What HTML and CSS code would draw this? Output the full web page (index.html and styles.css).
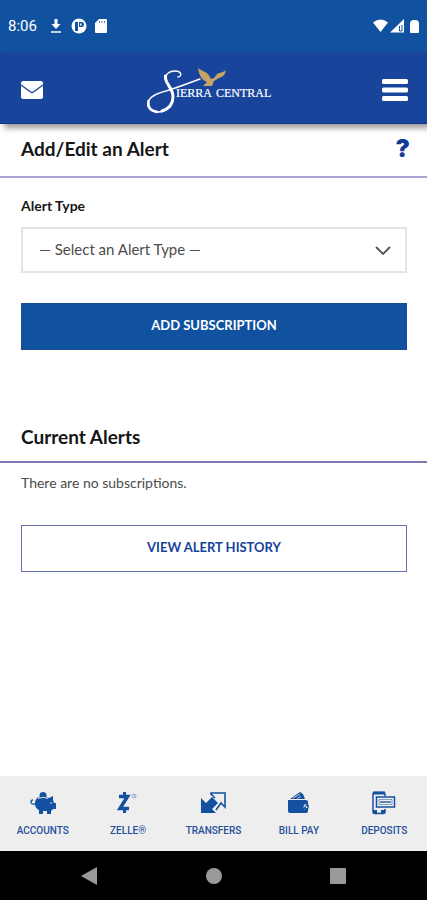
FILE: index.html
```html
<!DOCTYPE html>
<html lang="en">
<head>
<meta charset="utf-8">
<meta name="viewport" content="width=device-width, initial-scale=1">
<title>Add/Edit an Alert</title>
<link rel="stylesheet" href="styles.css">
</head>
<body>
<div class="status">
  <span class="clock">8:06</span>
  <svg class="status-left" width="58" height="16" viewBox="0 0 58 16" fill="#fff" aria-hidden="true">
    <path d="M4.500 1h3v5h3L6 11 1.500 6h3z"/><path d="M1 13h10v2H1z" opacity=".75"/>
    <circle cx="29" cy="8" r="7.500"/><path d="M25 4h3v9h-3zM29 4h2.500a2.500 2.500 0 0 1 0 5H29z" fill="#1052a0"/><path d="M30 5.500h1.500v2H30z"/>
    <path d="M55 1h-6l-4 4v9a1 1 0 0 0 1 1h10a1 1 0 0 0 1-1V2a1 1 0 0 0-1-1z"/>
    <path d="M49.500 3v2M52 3v2M54.500 3v2" stroke="#1052a0" stroke-width=".7"/>
  </svg>
  <svg class="status-right" width="48" height="16" viewBox="0 0 48 16" fill="#fff" aria-hidden="true">
    <path d="M0 4.500q7.500-6 15 0L7.500 14z"/>
    <path d="M17 14.500 31 1v13.500z"/><path d="M26.500 8v5h2.500V7" fill="none" stroke="#1052a0"/>
    <path d="M37 5q0-1 1-2l1.500-1h4L45 3q1 1 1 2v9q0 1-1 1h-7q-1 0-1-1z"/>
  </svg>
</div>
<header class="header">
  <button class="icon-button" aria-label="Messages">
    <svg width="22" height="18" viewBox="0 0 22 18"><rect width="22" height="18" rx="2" fill="#fff"/><path d="m0 4 9.500 7q1.500 1 3 0L22 4" fill="none" stroke="#18449c" stroke-width="1.400"/></svg>
  </button>
  <svg class="logo" width="132" height="50" viewBox="0 -2 132 50" role="img" aria-label="Sierra Central">
    <g fill="none" stroke="#fff" stroke-linecap="round">
      <path d="M31 10C36 9 34 4 28 4c-7 0-11 5-9 10 2 5 7 8 7 16 0 9-7 15-15 15-7 0-11-4-10-9 1-7 10-10 18-12 13-4 23-8 34-12" stroke-width="1.500"/>
      <path d="M18.500 9c-1 8 7.500 11 7.500 21 0 8-5 12-11 14" stroke-width="3"/>
      <path d="M1.500 34c-1 6 3 10 9 11" stroke-width="2.500"/>
    </g>
    <path d="M51 1c3 3 7 3 10 6l3 5 3-1 3-4c3-2 6-1 9-4-1 5-3 7-7 8l-5 3-2 5-9 0 4-4c-6-2-8-8-9-14z" fill="#c5a466"/>
    <text class="logo-text" x="29" y="30">IERRA</text>
    <text class="logo-text" x="69" y="30">CENTRAL</text>
  </svg>
  <button class="icon-button" aria-label="Menu">
    <svg width="26" height="22" viewBox="0 0 26 22" fill="#fff"><rect width="26" height="5" rx="1.500"/><rect y="8.500" width="26" height="5" rx="1.500"/><rect y="17" width="26" height="5" rx="1.500"/></svg>
  </button>
</header>
<main class="main">
  <div class="title-row">
    <h1 class="heading">Add/Edit an Alert</h1>
    <button class="help" aria-label="Help">?</button>
  </div>
  <form class="form">
    <label class="label" for="alert-type">Alert Type</label>
    <div class="select-wrap">
      <select class="select" id="alert-type"><option>— Select an Alert Type —</option></select>
      <svg class="chevron" width="16" height="10" viewBox="0 0 16 10" aria-hidden="true"><path d="m1 1 7 7 7-7" fill="none" stroke="#555" stroke-width="1.800"/></svg>
    </div>
    <button class="button primary" type="button">ADD SUBSCRIPTION</button>
  </form>
  <div class="title-row current"><h2 class="heading">Current Alerts</h2></div>
  <section class="alerts">
    <p class="empty">There are no subscriptions.</p>
    <button class="button" type="button">VIEW ALERT HISTORY</button>
  </section>
</main>
<nav class="tabs">
  <a class="tab" href="#accounts">
    <svg width="28" height="24" viewBox="0 0 28 24" fill="#1450a0"><circle cx="14" cy="4.500" r="3.500"/><path d="M8 7q6-3 12 0l4-2v4l1 3h2v6h-3l-2 2v3h-4v-3h-4v3h-4v-4q-4-2-4-6 0-4 2-6z"/><path d="M6 13C1 14 1 9 4 9" fill="none" stroke="#1450a0" stroke-width="1.300"/><path d="M9 7.500q5-2.500 10 0" fill="none" stroke="#eee" stroke-width=".9"/><circle cx="22" cy="12" r=".8" fill="#eee"/></svg>
    ACCOUNTS</a>
  <a class="tab" href="#zelle">
    <svg width="28" height="24" viewBox="0 0 28 24" fill="none" stroke="#1450a0"><path d="M5 5.500h8.500L6 17.500h9" stroke-width="3.500"/><path d="M10.500 1v4M10.500 18v4" stroke-width="3"/><circle cx="20" cy="5" r="2" stroke-width=".7" opacity=".6"/><path d="M19.500 4h1v2" stroke-width=".5" opacity=".6"/></svg>
    ZELLE®</a>
  <a class="tab" href="#transfers">
    <svg width="28" height="24" viewBox="0 0 28 24"><path d="M2 7v15h15l-4-4 6-6-6-6-6 6z" fill="#1450a0"/><path d="M12 4V2h14v14l-4-4-5 7M12 3l4 4" fill="none" stroke="#1450a0" stroke-width="1.600"/></svg>
    TRANSFERS</a>
  <a class="tab" href="#bill-pay">
    <svg width="28" height="24" viewBox="0 0 28 24" fill="#1450a0"><path d="M3 9h18q2 0 2 2v2h-3q-3 3 0 6h3v1q0 2-2 2H5q-2 0-2-2z"/><path d="m5 8 10-7 3 2 2 5z"/><path d="m8 7 7-4M12 7.500l4-2" stroke="#eee" stroke-width=".8"/><path d="M23 11v2l1 2-1 4h-3q-2-2 0-4z"/><circle cx="21.500" cy="16" r="1" fill="#eee"/></svg>
    BILL PAY</a>
  <a class="tab" href="#deposits">
    <svg width="28" height="24" viewBox="0 0 28 24" fill="none" stroke="#1450a0"><path d="M15 5V3q0-1.500-1.500-1.500h-9Q3 1.500 3 3v18q0 1.500 1.500 1.500h9q1.500 0 1.500-1.500v-3" stroke-width="1.500"/><path d="M3 2h12M3 20.500h4m4 0h4" stroke-width="3"/><path d="M6.500 6h18v10h-18z" stroke-width="1.500"/><path d="M9 8.500h13v5H9z" stroke-width=".7" opacity=".7"/><path d="M10 11h11" stroke-width="1.300"/></svg>
    DEPOSITS</a>
</nav>
<div class="system">
  <svg width="16" height="18" viewBox="0 0 16 18" aria-hidden="true"><path d="M0 9 16 0v18z" fill="#999"/></svg>
  <svg width="16" height="16" viewBox="0 0 16 16" aria-hidden="true"><circle cx="8" cy="8" r="8" fill="#999"/></svg>
  <svg width="16" height="16" viewBox="0 0 16 16" aria-hidden="true"><rect width="16" height="16" rx="1" fill="#999"/></svg>
</div>
</body>
</html>
```
FILE: styles.css
```css
* { box-sizing: border-box; }
body {
  margin: 0;
  min-height: 100vh;
  display: flex;
  flex-direction: column;
  background: #fff;
  color: #161616;
  font-family: Lato, "Noto Sans", sans-serif;
}
button { font-family: inherit; cursor: pointer; }
.status {
  display: flex;
  align-items: center;
  height: 52px;
  padding: 0 6px 0 8px;
  background: #1052a0;
  color: #fff;
}
.clock { font: 15px Roboto, sans-serif; }
.status-left { margin-left: 13px; }
.status-right { margin-left: auto; }
.header {
  display: flex;
  align-items: center;
  justify-content: space-between;
  height: 72px;
  padding: 4px 19px 0 21px;
  background: #18449c;
  border-bottom: 1px solid #0b3590;
  box-shadow: 4px 4px 6px rgba(0, 0, 0, .4);
}
.icon-button { display: flex; padding: 0; border: 0; background: none; }
.logo { overflow: visible; }
.logo-text { font: 12px "Liberation Serif", serif; fill: #fff; stroke: #fff; stroke-width: .2; }
.main { flex: 1; }
.title-row {
  display: flex;
  align-items: center;
  justify-content: space-between;
  height: 54px;
  padding: 0 17px 2px 21px;
  border-bottom: 2px solid #aaa4d4;
}
.heading { margin: 0; font-size: 19px; line-height: 24px; font-weight: 700; }
.help {
  padding: 0;
  border: 0;
  background: none;
  color: #143a98;
  font: 900 24px/28px Inter, sans-serif;
}
.form { padding: 18px 20px 0 21px; }
.label { display: block; font-size: 14px; line-height: 20px; font-weight: 700; }
.select-wrap { position: relative; margin: 11px 0 30px; }
.select {
  display: block;
  width: 100%;
  height: 46px;
  padding: 0 40px 2px 16px;
  appearance: none;
  border: 2px solid #e4e4e4;
  border-radius: 0;
  background: #fff;
  color: #4c4c4c;
  font: 15px Lato, sans-serif;
}
.chevron { position: absolute; right: 16px; top: 19px; pointer-events: none; }
.button {
  display: block;
  width: 100%;
  height: 47px;
  padding: 0 0 4px;
  border: 1px solid #6670ac;
  background: #fff;
  color: #17429b;
  font-size: 13px;
  font-weight: 700;
}
.primary { background: #1052a0; border-color: #1c4b98; color: #fff; }
.current { margin-top: 59px; padding-top: 4px; padding-bottom: 0; border-color: #7c78b4; }
.alerts { padding: 10px 20px 0 21px; }
.empty { margin: 0 0 32px; font-size: 14px; line-height: 20px; color: #4c4c4c; }
.tabs {
  display: grid;
  grid-template-columns: repeat(5, 1fr);
  height: 75px;
  background: #eee;
}
.tab {
  display: flex;
  flex-direction: column;
  align-items: center;
  gap: 9px;
  padding-top: 15px;
  color: #294f9d;
  text-decoration: none;
  font: 500 10px/14px Roboto, sans-serif;
}
.system {
  display: flex;
  align-items: center;
  justify-content: space-between;
  height: 49px;
  padding: 0 19%;
  background: #000;
}
```
